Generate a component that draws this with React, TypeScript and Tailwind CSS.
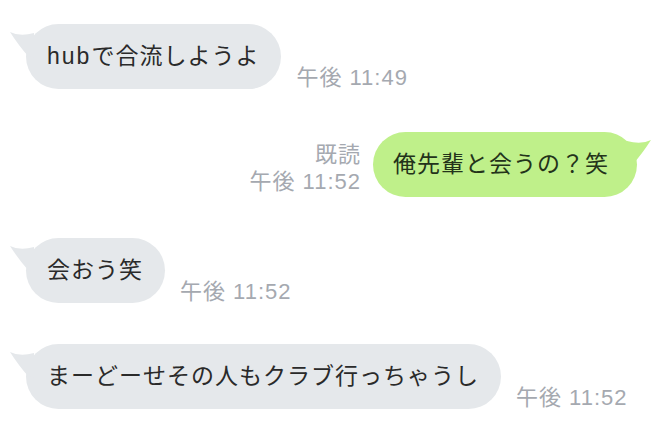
import React from "react";

type Msg = {
  side: "left" | "right";
  text: string;
  time: string;
  read?: boolean;
  top: string;
};

const messages: Msg[] = [
  { side: "left", text: "hubで合流しようよ", time: "午後 11:49", top: "mt-[24px]" },
  { side: "right", text: "俺先輩と会うの？笑", time: "午後 11:52", read: true, top: "mt-[43px]" },
  { side: "left", text: "会おう笑", time: "午後 11:52", top: "mt-[41px]" },
  { side: "left", text: "まーどーせその人もクラブ行っちゃうし", time: "午後 11:52", top: "mt-[41px]" },
];

const font = { fontFamily: '"Liberation Sans", "Noto Sans CJK JP", sans-serif' };

const Tail = ({ side }: { side: "left" | "right" }) => {
  if (side === "left") {
    return (
      <svg
        className="absolute left-[-16px] top-[8px]"
        width="26"
        height="26"
        viewBox="0 0 26 26"
      >
        <path d="M0 0 Q10 5 24 1 L24 26 L18 24 Q9 14 0 0 Z" fill="#e5e8eb" />
      </svg>
    );
  }
  return (
    <svg
      className="absolute right-[-14px] top-[8px]"
      width="26"
      height="26"
      viewBox="0 0 26 26"
    >
      <path d="M26 0 Q16 5 2 1 L2 26 L8 24 Q17 14 26 0 Z" fill="#bff08a" />
    </svg>
  );
};

// latin runs ("hub") are set a little wider in the original
const renderText = (text: string) =>
  text.split(/([A-Za-z]+)/).map((part, i) =>
    /^[A-Za-z]+$/.test(part) ? (
      <span key={i} className="tracking-[2px]">
        {part}
      </span>
    ) : (
      part
    )
  );

const Bubble = ({ msg }: { msg: Msg }) => (
  <div
    className={`relative h-[65px] flex items-center rounded-full text-[23px] tracking-[1px] ${
      msg.side === "left"
        ? "pl-[21px] pr-[22px] bg-[#e5e8eb] text-[#2a2a2a]"
        : "pl-[20px] pr-[28px] bg-[#bff08a] text-[#23331a]"
    }`}
  >
    <Tail side={msg.side} />
    <span className="relative whitespace-nowrap">{renderText(msg.text)}</span>
  </div>
);

export default function App() {
  return (
    <div className="w-[664px] h-[436px] bg-white overflow-hidden flex flex-col" style={font}>
      {messages.map((m, i) =>
        m.side === "left" ? (
          <div key={i} className={`flex items-end pl-[26px] ${m.top}`}>
            <Bubble msg={m} />
            <span className="ml-[15px] mb-[-2px] text-[22px] tracking-[1px] leading-[27px] text-[#a5a9b0] whitespace-nowrap">
              {m.time}
            </span>
          </div>
        ) : (
          <div key={i} className={`flex items-end justify-end pr-[27px] ${m.top}`}>
            <div className="mr-[12px] mb-[2px] flex flex-col items-end text-[22px] tracking-[1px] leading-[27px] text-[#a5a9b0]">
              {m.read && <span>既読</span>}
              <span className="whitespace-nowrap">{m.time}</span>
            </div>
            <Bubble msg={m} />
          </div>
        )
      )}
    </div>
  );
}
